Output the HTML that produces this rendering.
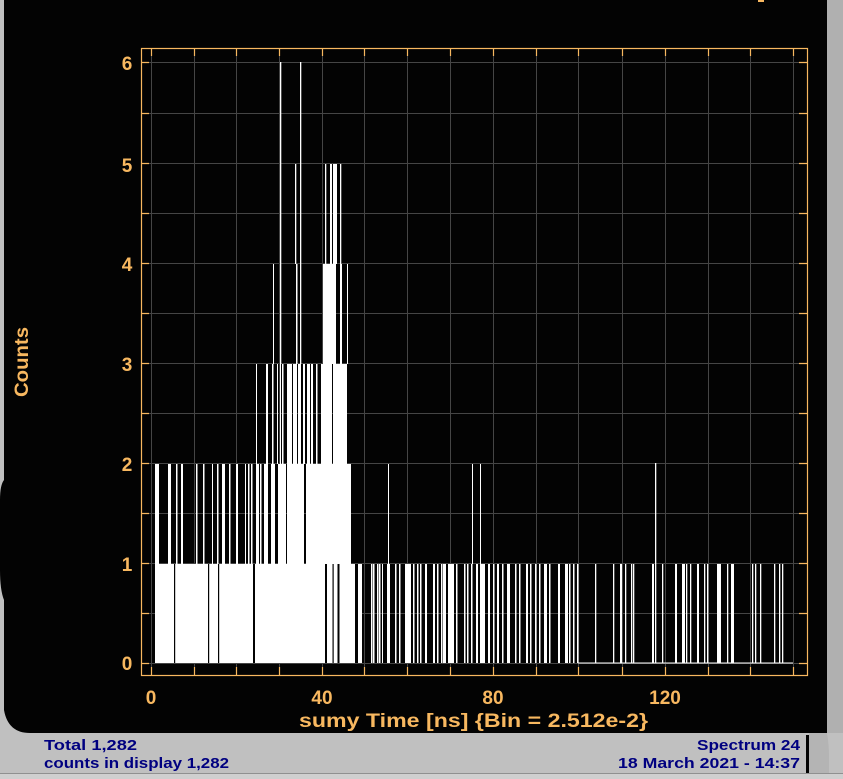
<!DOCTYPE html>
<html><head><meta charset="utf-8"><style>
html,body{margin:0;padding:0;background:#c0c0c0;width:843px;height:779px;overflow:hidden}
svg{display:block}
</style></head><body>
<svg width="843" height="779" viewBox="0 0 843 779" xmlns="http://www.w3.org/2000/svg">
<rect x="0" y="0" width="843" height="779" fill="#c0c0c0"/>
<rect x="827" y="0" width="16" height="733" fill="#b0b0b0"/>
<path d="M4 0 H827 V733 H30 Q8 733 4 710 V600 Q0 590 0 570 V500 Q0 485 4 480 V0 Z" fill="#030303"/>
<rect x="758" y="0" width="6" height="2" fill="#f8b860"/>
<!-- grid -->
<g stroke="#454545" stroke-width="1">
<path d="M151.5 48V675M194.5 48V675M236.5 48V675M279.5 48V675M322.5 48V675M364.5 48V675M407.5 48V675M450.5 48V675M493.5 48V675M536.5 48V675M578.5 48V675M622.5 48V675M665.5 48V675M708.5 48V675M750.5 48V675M793.5 48V675"/>
<path d="M141 62.5H807M141 113.5H807M141 163.5H807M141 213.5H807M141 263.5H807M141 313.5H807M141 363.5H807M141 413.5H807M141 463.5H807M141 513.5H807M141 563.5H807M141 613.5H807M141 663.5H807"/>
</g>
<g fill="#fff">
<!-- level 1 dense -->
<rect x="155" y="564" width="200" height="99"/>
<rect x="358" y="564" width="3" height="99"/>
<!-- level 1 sparse -->
<rect x="350" y="564" width="6" height="99"/><rect x="358" y="564" width="4" height="99"/>
<rect x="371" y="564" width="1.5" height="99"/><rect x="373" y="564" width="1.5" height="99"/>
<rect x="377" y="564" width="1.5" height="99"/><rect x="379" y="564" width="1.5" height="99"/>
<rect x="382" y="564" width="1" height="99"/><rect x="387" y="564" width="3" height="99"/>
<rect x="395" y="564" width="1.5" height="99"/><rect x="399" y="564" width="1.5" height="99"/>
<rect x="405" y="564" width="6" height="99"/><rect x="413" y="564" width="1.5" height="99"/>
<rect x="417" y="564" width="1.5" height="99"/><rect x="420" y="564" width="1.5" height="99"/>
<rect x="425" y="564" width="2" height="99"/><rect x="433" y="564" width="2" height="99"/>
<rect x="437" y="564" width="1.5" height="99"/><rect x="441" y="564" width="1.5" height="99"/>
<rect x="443" y="564" width="3" height="99"/><rect x="448" y="564" width="6" height="99"/>
<rect x="456" y="564" width="1.5" height="99"/><rect x="464" y="564" width="1.5" height="99"/>
<rect x="467" y="564" width="1.5" height="99"/><rect x="471" y="564" width="1.5" height="99"/>
<rect x="476" y="564" width="2" height="99"/><rect x="480" y="564" width="5" height="99"/>
<rect x="488" y="564" width="2" height="99"/><rect x="493" y="564" width="1.5" height="99"/>
<rect x="497" y="564" width="2" height="99"/><rect x="502" y="564" width="1.5" height="99"/>
<rect x="507" y="564" width="3" height="99"/><rect x="515" y="564" width="1.5" height="99"/>
<rect x="519" y="564" width="1.5" height="99"/><rect x="526" y="564" width="2" height="99"/>
<rect x="530" y="564" width="1.5" height="99"/><rect x="535" y="564" width="1.5" height="99"/>
<rect x="539" y="564" width="1.5" height="99"/><rect x="544" y="564" width="3" height="99"/>
<rect x="549" y="564" width="1.5" height="99"/><rect x="558" y="564" width="2" height="99"/>
<rect x="565" y="564" width="3" height="99"/><rect x="569" y="564" width="1.5" height="99"/>
<rect x="573" y="564" width="1.5" height="99"/><rect x="577" y="564" width="1.5" height="99"/>
<rect x="595" y="564" width="1.3" height="99"/><rect x="613" y="564" width="1.3" height="99"/>
<rect x="620" y="564" width="2" height="99"/><rect x="625" y="564" width="1.3" height="99"/>
<rect x="631" y="564" width="1.3" height="99"/><rect x="633" y="564" width="1.3" height="99"/>
<rect x="652" y="564" width="2" height="99"/><rect x="655" y="463" width="1.3" height="200"/>
<rect x="662" y="564" width="1.3" height="99"/><rect x="675" y="564" width="2" height="99"/>
<rect x="682" y="564" width="3" height="99"/><rect x="686" y="564" width="1.3" height="99"/>
<rect x="690" y="564" width="1.3" height="99"/><rect x="697" y="564" width="2" height="99"/>
<rect x="704" y="564" width="1.3" height="99"/><rect x="707" y="564" width="1.3" height="99"/>
<rect x="717" y="564" width="4" height="99"/><rect x="727" y="564" width="1.3" height="99"/>
<rect x="731" y="564" width="1.3" height="99"/><rect x="732" y="564" width="2" height="99"/>
<rect x="752" y="564" width="1.3" height="99"/><rect x="755" y="564" width="1.3" height="99"/>
<rect x="760" y="564" width="1.3" height="99"/><rect x="774" y="564" width="1.3" height="99"/>
<rect x="779" y="564" width="1.3" height="99"/><rect x="782" y="564" width="1.3" height="99"/>
<rect x="578" y="662.5" width="215" height="1"/>
<!-- level 2 -->
<rect x="155" y="464" width="4" height="100"/><rect x="168" y="464" width="3" height="100"/>
<rect x="176" y="464" width="1.5" height="100"/><rect x="181" y="464" width="2" height="100"/>
<rect x="196" y="464" width="1.5" height="100"/><rect x="203" y="464" width="1.5" height="100"/>
<rect x="212" y="464" width="1" height="100"/><rect x="217" y="464" width="1.5" height="100"/>
<rect x="222" y="464" width="3" height="100"/><rect x="229" y="464" width="1.5" height="100"/>
<rect x="236" y="464" width="2" height="100"/><rect x="245" y="464" width="1" height="100"/>
<rect x="248" y="464" width="1.5" height="100"/><rect x="251" y="464" width="1.5" height="100"/>
<rect x="256" y="464" width="3" height="100"/><rect x="260" y="464" width="1.5" height="100"/>
<rect x="264" y="464" width="4" height="100"/><rect x="271" y="464" width="4" height="100"/>
<rect x="278" y="464" width="8" height="100"/><rect x="287" y="464" width="17" height="100"/>
<rect x="306" y="464" width="6" height="100"/><rect x="312" y="464" width="39" height="100"/>
<rect x="350" y="464" width="1" height="100"/><rect x="388" y="464" width="1" height="100"/>
<rect x="472" y="464" width="1" height="100"/><rect x="480" y="464" width="1" height="100"/>
<!-- level 3 -->
<rect x="256" y="364" width="1" height="100"/><rect x="266" y="364" width="2" height="100"/>
<rect x="272" y="364" width="1.5" height="100"/><rect x="277" y="364" width="1" height="100"/>
<rect x="280" y="364" width="1" height="100"/><rect x="282" y="364" width="1.5" height="100"/>
<rect x="287" y="364" width="5" height="100"/><rect x="293" y="364" width="4" height="100"/>
<rect x="298" y="364" width="3" height="100"/><rect x="303" y="364" width="2" height="100"/>
<rect x="307" y="364" width="3" height="100"/><rect x="311" y="364" width="2" height="100"/>
<rect x="316" y="364" width="1.5" height="100"/><rect x="321" y="364" width="11" height="100"/>
<rect x="333" y="364" width="14" height="100"/>
<!-- level 4 -->
<rect x="273" y="264" width="1" height="100"/><rect x="296" y="264" width="1.5" height="100"/>
<rect x="323" y="264" width="4" height="100"/><rect x="327" y="264" width="9" height="100"/>
<rect x="340" y="264" width="2" height="100"/><rect x="347" y="264" width="1" height="100"/>
<!-- level 5 -->
<rect x="295" y="164" width="1.3" height="100"/><rect x="325" y="164" width="1.3" height="100"/>
<rect x="330" y="164" width="2" height="100"/><rect x="333" y="164" width="4" height="100"/>
<rect x="340" y="164" width="1.3" height="100"/>
<!-- level 6 -->
<rect x="280" y="62" width="1.3" height="302"/><rect x="300" y="62" width="1.3" height="302"/>
</g>
<!-- black gaps in level 1 dense -->
<g fill="#030303">
<rect x="174" y="564" width="1.2" height="99"/><rect x="208" y="564" width="1.2" height="99"/>
<rect x="218" y="564" width="1.2" height="99"/><rect x="253" y="564" width="2" height="99"/>
<rect x="325" y="564" width="2" height="99"/><rect x="332.5" y="564" width="1.2" height="99"/>
<rect x="337.5" y="564" width="2" height="99"/><rect x="355" y="564" width="3" height="99"/>
</g>
<!-- frame -->
<g stroke="#f8b860" stroke-width="1.2" fill="none">
<rect x="141.5" y="48.5" width="666" height="627"/>
<path d="M151.5 48V56M194.5 48V56M236.5 48V56M279.5 48V56M322.5 48V56M364.5 48V56M407.5 48V56M450.5 48V56M493.5 48V56M536.5 48V56M578.5 48V56M622.5 48V56M665.5 48V56M708.5 48V56M750.5 48V56M793.5 48V56"/>
<path d="M151.5 675V667M194.5 675V667M236.5 675V667M279.5 675V667M322.5 675V667M364.5 675V667M407.5 675V667M450.5 675V667M493.5 675V667M536.5 675V667M578.5 675V667M622.5 675V667M665.5 675V667M708.5 675V667M750.5 675V667M793.5 675V667"/>
<path d="M141 62.5H149M141 113.5H149M141 163.5H149M141 213.5H149M141 263.5H149M141 313.5H149M141 363.5H149M141 413.5H149M141 463.5H149M141 513.5H149M141 563.5H149M141 613.5H149M141 663.5H149"/>
<path d="M807 62.5H799M807 113.5H799M807 163.5H799M807 213.5H799M807 263.5H799M807 313.5H799M807 363.5H799M807 413.5H799M807 463.5H799M807 513.5H799M807 563.5H799M807 613.5H799M807 663.5H799"/>
</g>
<g fill="#f8b860" font-family="Liberation Sans, sans-serif" font-weight="bold" font-size="19">
<text x="127" y="70" text-anchor="middle">6</text>
<text x="127" y="172" text-anchor="middle">5</text>
<text x="127" y="271" text-anchor="middle">4</text>
<text x="127" y="371" text-anchor="middle">3</text>
<text x="127" y="471" text-anchor="middle">2</text>
<text x="127" y="571" text-anchor="middle">1</text>
<text x="127" y="670" text-anchor="middle">0</text>
<text x="151" y="704" text-anchor="middle">0</text>
<text x="322" y="704" text-anchor="middle">40</text>
<text x="493" y="704" text-anchor="middle">80</text>
<text x="665" y="704" text-anchor="middle">120</text>
<text x="299" y="727" textLength="349" lengthAdjust="spacingAndGlyphs">sumy Time [ns] {Bin = 2.512e-2}</text>
<text transform="translate(28,397) rotate(-90)" textLength="70" lengthAdjust="spacingAndGlyphs">Counts</text>
</g>
<!-- status bar -->
<rect x="0" y="733" width="827" height="40" fill="#c0c0c0"/>
<rect x="806" y="735" width="3" height="38" fill="#030303"/>
<path d="M809 733 H827 Q829 745 829 755 V773 H809 Z" fill="#b4b4b4"/>
<rect x="0" y="773" width="843" height="1" fill="#909090"/>
<rect x="0" y="774" width="843" height="5" fill="#cfcfcf"/>
<g fill="#000080" font-family="Liberation Sans, sans-serif" font-weight="bold" font-size="15">
<text x="44" y="750" textLength="93" lengthAdjust="spacingAndGlyphs">Total 1,282</text>
<text x="44" y="768" textLength="185" lengthAdjust="spacingAndGlyphs">counts in display 1,282</text>
<text x="697" y="750" textLength="103" lengthAdjust="spacingAndGlyphs">Spectrum 24</text>
<text x="618" y="768" textLength="182" lengthAdjust="spacingAndGlyphs">18 March 2021 - 14:37</text>
</g>
</svg>
</body></html>
